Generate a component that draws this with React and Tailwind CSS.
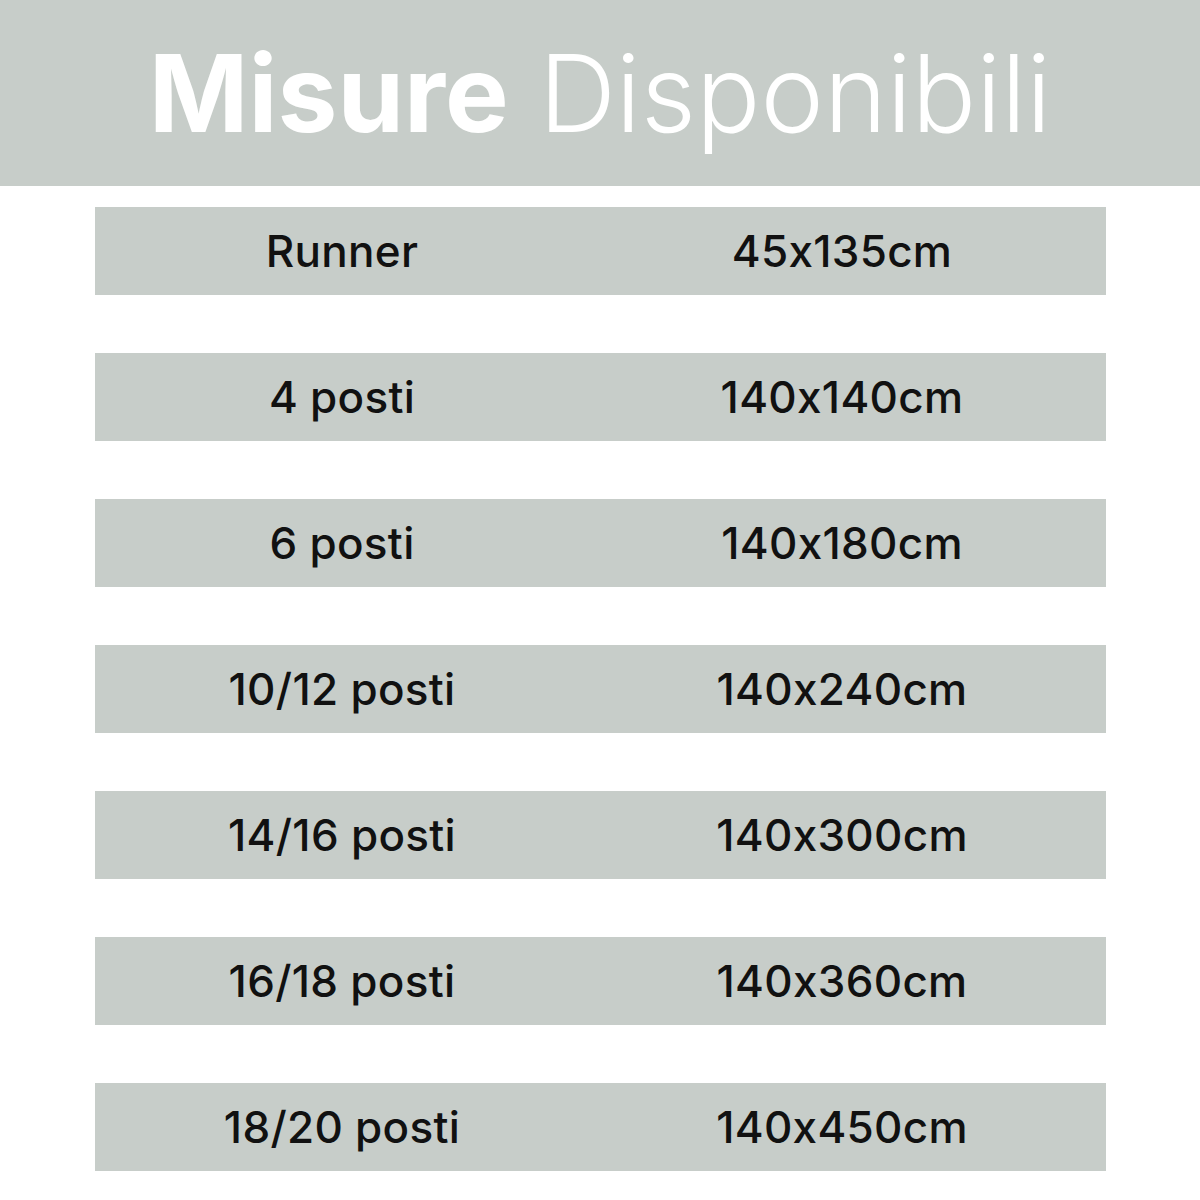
const sizes = [
  { label: 'Runner', size: '45x135cm' },
  { label: '4 posti', size: '140x140cm' },
  { label: '6 posti', size: '140x180cm' },
  { label: '10/12 posti', size: '140x240cm' },
  { label: '14/16 posti', size: '140x300cm' },
  { label: '16/18 posti', size: '140x360cm' },
  { label: '18/20 posti', size: '140x450cm' },
];

export default function App() {
  return (
    <div
      className="w-[1200px] h-[1200px] bg-white overflow-hidden [font-feature-settings:'calt'_0]"
      style={{ fontFamily: 'Inter, "Open Sans", sans-serif' }}
    >
      <header className="h-[186px] bg-[#c7cdc9] flex items-center justify-center">
        <h1 className="text-[107px] leading-none text-white">
          <span className="font-bold">Misure</span>{' '}
          <span className="font-light">Disponibili</span>
        </h1>
      </header>

      <div className="pt-[21px] pl-[95px] flex flex-col gap-[58px]">
        {sizes.map((row) => (
          <div key={row.label} className="w-[1011px] h-[88px] bg-[#c7cdc9] flex items-center text-[44px] tracking-[0.3px] font-medium text-[#111]">
            <div className="w-[494px] text-center">{row.label}</div>
            <div className="w-[506px] text-center">{row.size}</div>
          </div>
        ))}
      </div>
    </div>
  );
}
